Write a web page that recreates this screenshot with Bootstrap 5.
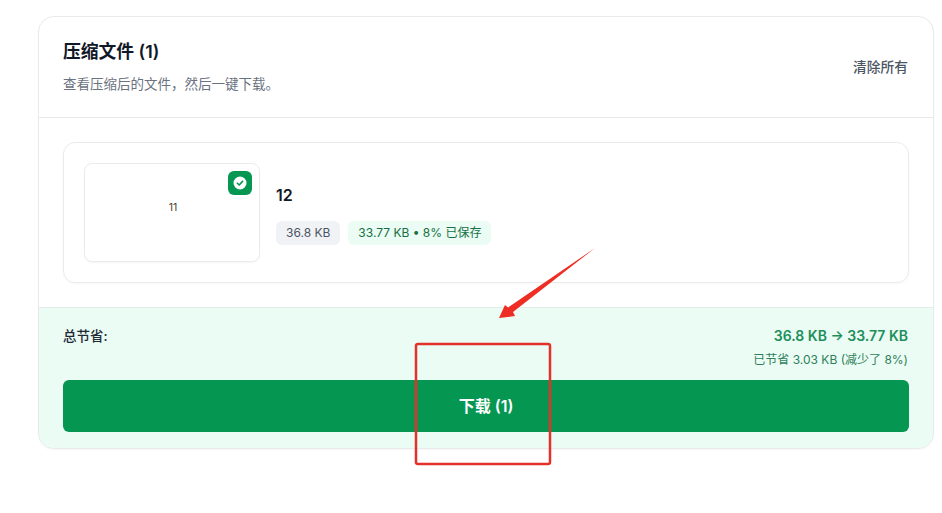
<!DOCTYPE html>
<html lang="zh">
<head>
<meta charset="utf-8">
<title>压缩文件</title>
<link href="https://cdn.jsdelivr.net/npm/bootstrap@5.3.0/dist/css/bootstrap.min.css" rel="stylesheet">
<style>
html, body { height: 100%; background: #fff; overflow: hidden; }
body { font-family: Inter, "Noto Sans CJK SC", sans-serif; color: #111827; padding: 16px 8px 0 38px; }
.shell { width: 896px; height: 433px; border: 1px solid #e8eaee; border-radius: 16px; overflow: hidden; box-shadow: 0 1px 2px rgba(0,0,0,.04); }
.head-bar { height: 101px; padding: 0 25px 0 24px; border-bottom: 1px solid #e8eaee; }
.head-title { font-size: 17.8px; line-height: 24px; font-weight: 600; margin: 0 0 10px; }
.head-sub { font-size: 13.5px; line-height: 20px; color: #6b7280; margin: 0; }
.clear-link { font-size: 13.75px; font-weight: 500; color: #4b5563; }
.body-area { height: 189px; padding: 24px; }
.file-box { height: 141px; border: 1px solid #e8eaee; border-radius: 12px; padding: 20px; gap: 16px; box-shadow: 0 1px 2px rgba(0,0,0,.03); }
.thumb { width: 176px; height: 99px; border: 1px solid #e8eaee; border-radius: 8px; font-size: 10.5px; color: #3f3f2f; box-shadow: 0 1px 2px rgba(0,0,0,.04); padding: 0 0 9px 2px; }
.ok-mark { top: 7px; right: 7px; width: 24px; height: 24px; background: #059652; border-radius: 6px; }
.file-info { padding-top: 3px; }
.file-name { font-size: 16px; line-height: 24px; font-weight: 600; margin-bottom: 14px; }
.chip { font-size: 12px; line-height: 16px; padding: 4px 10px; border-radius: 6px; font-weight: 400; }
.chip-grey { background: #f1f2f6; color: #4b5563; }
.chip-green { background: #eafcf3; color: #166f45; }
.foot-area { height: 141px; background: #eafcf3; border-top: 1px solid #e3ece8; padding: 18px 25px 0 24px; }
.sum-label { font-size: 13.5px; line-height: 20px; font-weight: 500; color: #1f2937; }
.sum-main { font-size: 14px; line-height: 20px; font-weight: 600; color: #1d8f5c; }
.sum-sub { font-size: 12px; line-height: 16px; color: #2f7f5b; margin-top: 6px; }
.dl-btn { height: 52px; background: #059652; border: 0; border-radius: 6px; color: #fff; font-size: 16px; font-weight: 600; margin-top: 12px; width: 846px; }
.dl-btn:hover { background: #059652; color: #fff; }
.mark-layer { top: 0; left: 0; width: 942px; height: 513px; pointer-events: none; }
</style>
</head>
<body>
<div class="shell bg-white">
  <div class="head-bar d-flex justify-content-between align-items-center">
    <div>
      <h2 class="head-title">压缩文件 (1)</h2>
      <p class="head-sub">查看压缩后的文件，然后一键下载。</p>
    </div>
    <span class="clear-link">清除所有</span>
  </div>
  <div class="body-area">
    <div class="file-box d-flex align-items-center">
      <div class="thumb position-relative d-flex align-items-center justify-content-center flex-shrink-0">
        <span>11</span>
        <span class="ok-mark position-absolute d-flex align-items-center justify-content-center">
          <svg width="14" height="14" viewBox="0 0 14 14"><circle cx="7" cy="7" r="6.500" fill="#fff"/><path d="M4.400 7.200 6.200 9 9.600 5.400" fill="none" stroke="#059652" stroke-width="1.600" stroke-linecap="round" stroke-linejoin="round"/></svg>
        </span>
      </div>
      <div class="file-info">
        <div class="file-name">12</div>
        <div class="d-flex gap-2">
          <span class="chip chip-grey">36.8 KB</span>
          <span class="chip chip-green">33.77 KB • 8% 已保存</span>
        </div>
      </div>
    </div>
  </div>
  <div class="foot-area">
    <div class="d-flex justify-content-between align-items-start">
      <span class="sum-label">总节省:</span>
      <div class="text-end">
        <div class="sum-main">36.8 KB → 33.77 KB</div>
        <div class="sum-sub">已节省 3.03 KB (减少了 8%)</div>
      </div>
    </div>
    <button type="button" class="btn dl-btn">下载 (1)</button>
  </div>
</div>
<svg class="mark-layer position-absolute" viewBox="0 0 942 513">
  <path d="M595 248 513 312 515 316 499 318 505 305 508 307.500Z" fill="#ee2d24"/>
  <rect x="416" y="344" width="134" height="120" rx="2" fill="none" stroke="#e4322b" stroke-width="2.500"/>
</svg>
<script src="https://cdn.jsdelivr.net/npm/bootstrap@5.3.0/dist/js/bootstrap.bundle.min.js"></script>
</body>
</html>
